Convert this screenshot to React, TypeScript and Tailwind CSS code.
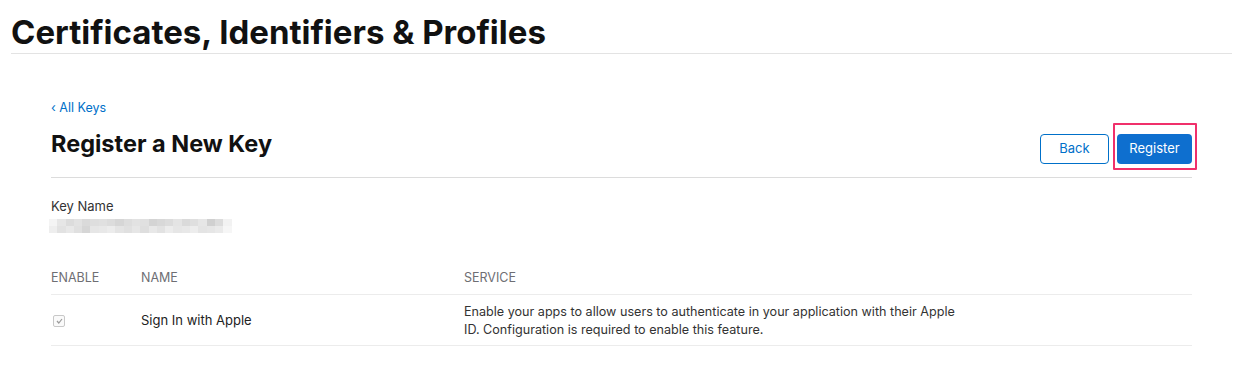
import React from 'react';

const blur = [
  ['#f4f4f4', '#e6e6e6', '#dcdcdc', '#e2e2e2', '#dadada', '#dedede', '#e0e0e0', '#dcdcdc', '#d6d6d6', '#dddddd', '#e2e2e2', '#e0e0e0', '#d4d4d4', '#d8d8d8', '#dcdcdc', '#e4e4e4', '#dadada', '#dfdfdf', '#e6e6e6', '#d0d0d0', '#dcdcdc', '#f2f2f2'],
  ['#eeeeee', '#e2e2e2', '#e8e8e8', '#e0e0e0', '#d6d6d6', '#e6e6e6', '#e8e8e8', '#ececec', '#e4e4e4', '#e0e0e0', '#e6e6e6', '#dedede', '#e8e8e8', '#e2e2e2', '#ececec', '#e6e6e6', '#e8e8e8', '#ededed', '#e4e4e4', '#e6e6e6', '#eaeaea', '#f6f6f6'],
];

export default function App() {
  return (
    <div className="w-[1245px] h-[368px] bg-white px-[11px] text-[#1d1d1f]" style={{ fontFamily: 'Inter, "Liberation Sans", sans-serif' }}>
      <div className="w-[1221px] border-b border-[#e3e3e3] pt-[16px] pb-[4px]">
        <h1 className="text-[33px] leading-[33px] font-bold text-[#111]">Certificates, Identifiers &amp; Profiles</h1>
      </div>

      <div className="ml-[40px] w-[1141px] pt-[46px]">
        <a className="text-[12.5px] leading-[16px] text-[#0070c9] block">‹ All Keys</a>

        <div className="flex items-start justify-between border-b border-[#dcdcdc] mt-[11px] pb-[13px]">
          <h2 className="text-[23.5px] leading-[28px] font-bold text-[#111] mt-[3px]">Register a New Key</h2>
          <div className="flex items-center gap-[8px] mt-[7px]">
            <button className="w-[69px] h-[30px] rounded-[4px] border border-[#0070c9] text-[#0070c9] text-[13px]">Back</button>
            <div className="relative">
              <button className="w-[75px] h-[30px] rounded-[4px] bg-[#0e6fcf] text-white text-[13px]">Register</button>
              <div className="absolute left-[-4px] right-[-5px] top-[-11px] bottom-[-6px] border-[2.5px] border-[#f0306b] rounded-[1px]" />
            </div>
          </div>
        </div>

        <div className="pt-[20px]">
          <div className="text-[13px] leading-[16px] text-[#333]">Key Name</div>
          <div className="mt-[5px] ml-[-2px] flex flex-col">
            {blur.map((row, i) => (
              <div key={i} className="flex">
                {row.map((c, j) => (
                  <div key={j} className="w-[8.3px] h-[7px]" style={{ backgroundColor: c }} />
                ))}
              </div>
            ))}
          </div>
        </div>

        <div className="mt-[37px]">
          <div className="flex border-b border-[#ececec] pb-[8px] text-[12.5px] leading-[16px] text-[#6e6e73]">
            <div className="w-[90px]">ENABLE</div>
            <div className="w-[323px]">NAME</div>
            <div>SERVICE</div>
          </div>
          <div className="flex items-center border-b border-[#ececec] h-[51px] pt-[2px] text-[13px]">
            <div className="w-[90px] pl-[2px]">
              <div className="w-[12px] h-[12px] rounded-[2px] border border-[#c8c8c8] bg-[#fafafa] flex items-center justify-center">
                <svg width="7" height="6" viewBox="0 0 7 6"><path d="M1 3 L2.8 5 L6 1" fill="none" stroke="#9a9a9a" strokeWidth="1.2" /></svg>
              </div>
            </div>
            <div className="w-[323px] text-[#222]">Sign In with Apple</div>
            <div className="w-[500px] text-[12.6px] leading-[18px] text-[#333]">
              Enable your apps to allow users to authenticate in your application with their Apple ID. Configuration is required to enable this feature.
            </div>
          </div>
        </div>
      </div>
    </div>
  );
}
